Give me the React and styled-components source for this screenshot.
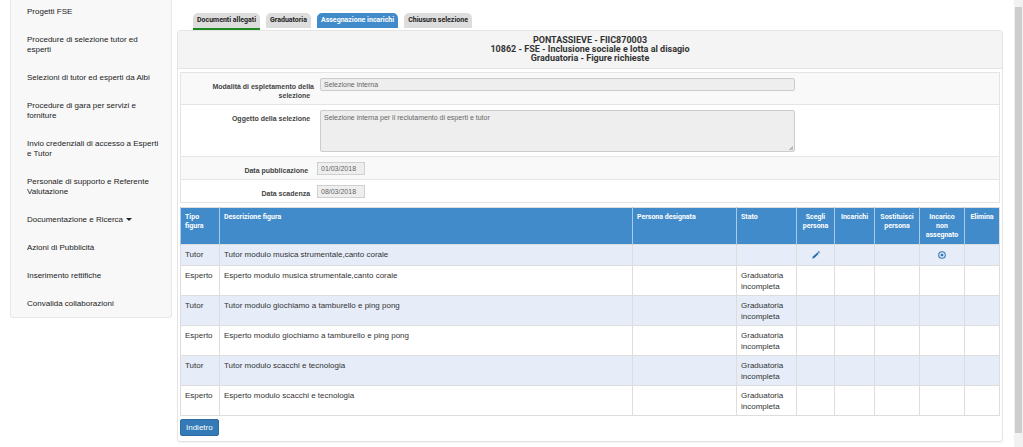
import styled, { createGlobalStyle } from 'styled-components'

const menu = [
  { label: 'Progetti FSE' },
  { label: 'Procedure di selezione tutor ed esperti' },
  { label: 'Selezioni di tutor ed esperti da Albi' },
  { label: 'Procedure di gara per servizi e forniture' },
  { label: 'Invio credenziali di accesso a Esperti e Tutor' },
  { label: 'Personale di supporto e Referente Valutazione' },
  { label: 'Documentazione e Ricerca', dropdown: true },
  { label: 'Azioni di Pubblicità' },
  { label: 'Inserimento rettifiche' },
  { label: 'Convalida collaborazioni' },
]

const tabs = [
  { label: 'Documenti allegati', done: true },
  { label: 'Graduatoria' },
  { label: 'Assegnazione incarichi', active: true },
  { label: 'Chiusura selezione' },
]

const figure = [
  {
    tipo: 'Tutor',
    descrizione: 'Tutor modulo musica strumentale,canto corale',
    stato: '',
    editable: true,
  },
  {
    tipo: 'Esperto',
    descrizione: 'Esperto modulo musica strumentale,canto corale',
    stato: 'Graduatoria incompleta',
  },
  {
    tipo: 'Tutor',
    descrizione: 'Tutor modulo giochiamo a tamburello e ping pong',
    stato: 'Graduatoria incompleta',
  },
  {
    tipo: 'Esperto',
    descrizione: 'Esperto modulo giochiamo a tamburello e ping pong',
    stato: 'Graduatoria incompleta',
  },
  {
    tipo: 'Tutor',
    descrizione: 'Tutor modulo scacchi e tecnologia',
    stato: 'Graduatoria incompleta',
  },
  {
    tipo: 'Esperto',
    descrizione: 'Esperto modulo scacchi e tecnologia',
    stato: 'Graduatoria incompleta',
  },
]

export default function App() {
  return (
    <>
      <GlobalStyle />
      <Page>
        <Sidebar>
          {menu.map(({ label, dropdown }) => (
            <MenuLink key={label} href="#">
              {label}
              {dropdown && <Caret />}
            </MenuLink>
          ))}
        </Sidebar>
        <Main>
          <Tabs>
            {tabs.map(({ label, active, done }) => (
              <Tab key={label} href="#" $active={active} $done={done}>
                {label}
              </Tab>
            ))}
          </Tabs>
          <Panel>
            <Title>
              PONTASSIEVE - FIIC870003
              <br />
              10862 - FSE - Inclusione sociale e lotta al disagio
              <br />
              Graduatoria - Figure richieste
            </Title>
            <Content>
              <Form>
                <FormRow $shaded>
                  <Label htmlFor="modalita">
                    Modalità di espletamento della selezione&nbsp;&nbsp;
                  </Label>
                  <TextInput id="modalita" defaultValue="Selezione interna" readOnly />
                </FormRow>
                <FormRow>
                  <Label htmlFor="oggetto">Oggetto della selezione&nbsp;&nbsp;</Label>
                  <TextArea
                    id="oggetto"
                    defaultValue="Selezione interna per il reclutamento di esperti e tutor"
                    readOnly
                  />
                </FormRow>
                <FormRow $shaded $compact>
                  <Label htmlFor="pubblicazione">
                    Data pubblicazione&nbsp;&nbsp;&nbsp;
                  </Label>
                  <DateInput id="pubblicazione" defaultValue="01/03/2018" readOnly />
                </FormRow>
                <FormRow $compact>
                  <Label htmlFor="scadenza">Data scadenza&nbsp;&nbsp;</Label>
                  <DateInput id="scadenza" defaultValue="08/03/2018" readOnly />
                </FormRow>
              </Form>
              <Table>
                <colgroup>
                  <Col $width={39} />
                  <col />
                  <Col $width={104} />
                  <Col $width={60} />
                  <Col $width={38} />
                  <Col $width={40} />
                  <Col $width={45} />
                  <Col $width={45} />
                  <Col $width={35} />
                </colgroup>
                <thead>
                  <tr>
                    <Th>
                      Tipo
                      <br />
                      figura
                    </Th>
                    <Th>Descrizione figura</Th>
                    <Th>Persona designata</Th>
                    <Th>Stato</Th>
                    <Th $center>Scegli persona</Th>
                    <Th $center>Incarichi</Th>
                    <Th $center>Sostituisci persona</Th>
                    <Th $center>
                      Incarico
                      <br />
                      non
                      <br />
                      assegnato
                    </Th>
                    <Th $center>Elimina</Th>
                  </tr>
                </thead>
                <tbody>
                  {figure.map(({ tipo, descrizione, stato, editable }) => (
                    <Row key={descrizione}>
                      <Td>{tipo}</Td>
                      <Td>{descrizione}</Td>
                      <Td />
                      <Td>{stato}</Td>
                      <Td $center>
                        {editable && (
                          <IconButton aria-label="Scegli persona">
                            <PencilIcon />
                          </IconButton>
                        )}
                      </Td>
                      <Td />
                      <Td />
                      <Td $center>
                        {editable && (
                          <IconButton aria-label="Incarico non assegnato">
                            <RemoveIcon />
                          </IconButton>
                        )}
                      </Td>
                      <Td />
                    </Row>
                  ))}
                </tbody>
              </Table>
              <BackButton>Indietro</BackButton>
            </Content>
          </Panel>
        </Main>
        <ScrollTrack>
          <ScrollThumb />
        </ScrollTrack>
      </Page>
    </>
  )
}

function PencilIcon() {
  return (
    <svg width="8" height="8" viewBox="0 0 16 16" fill="#2a6fb0">
      <path d="M0.5 15.5 L1.8 11.2 L10.6 2.8 L13.4 5.6 L4.8 14.2 Z" />
      <path d="M11.5 2 L13 0.6 Q13.8 0 14.6 0.8 L15.3 1.5 Q16 2.4 15.4 3.2 L14.2 4.7 Z" />
    </svg>
  )
}

function RemoveIcon() {
  return (
    <svg width="8" height="8" viewBox="0 0 16 16" fill="none" stroke="#2f78ba">
      <circle cx="8" cy="8" r="6.6" strokeWidth="2.2" />
      <path d="M5.6 5.6 L10.4 10.4 M10.4 5.6 L5.6 10.4" strokeWidth="2.4" />
    </svg>
  )
}

const headingFont = "Roboto, 'Liberation Sans', Arial, sans-serif"

const GlobalStyle = createGlobalStyle`
  * {
    box-sizing: border-box;
  }

  body {
    margin: 0;
    background: #fff;
    color: #333;
    font-family: 'Liberation Sans', Arial, sans-serif;
    font-size: 8px;
    line-height: 11px;
  }

  button, input, textarea {
    font-family: inherit;
  }
`

const Page = styled.div`
  display: flex;
  align-items: flex-start;
  min-height: 100vh;
  padding-left: 10px;
`

const Sidebar = styled.nav`
  display: flex;
  flex-direction: column;
  gap: 18px;
  flex: none;
  width: 162px;
  padding: 7px 8px 8px 16px;
  background: #f8f8f8;
  border: 1px solid #e7e7e7;
  border-top: none;
  border-radius: 0 0 3px 3px;
`

const MenuLink = styled.a`
  color: #222;
  line-height: 10px;
  text-decoration: none;
`

const Caret = styled.span`
  display: inline-block;
  margin-left: 3px;
  vertical-align: middle;
  border-top: 3px solid #222;
  border-left: 3px solid transparent;
  border-right: 3px solid transparent;
`

const Main = styled.main`
  flex: 1;
  min-width: 0;
  padding: 13px 11px 5px 5px;
`

const Tabs = styled.nav`
  display: flex;
  align-items: flex-start;
  gap: 6px;
  height: 17px;
  padding-left: 16px;
`

const Tab = styled.a`
  padding: 3px 4px;
  border-bottom: ${(props) => (props.$done ? '2px solid #1f8a1f' : 'none')};
  border-radius: 5px 5px 0 0;
  background: ${(props) => (props.$active ? '#428bca' : '#ddd')};
  color: ${(props) => (props.$active ? '#fff' : '#222')};
  font-family: ${headingFont};
  font-size: 7px;
  font-weight: bold;
  line-height: 9px;
  text-decoration: none;
`

const Panel = styled.section`
  border: 1px solid #e4e4e4;
  border-radius: 3px;
  box-shadow: 0 1px 1px rgba(0, 0, 0, 0.05);
`

const Title = styled.h1`
  margin: 0;
  padding: 5px;
  border-bottom: 1px solid #e4e4e4;
  background: #f4f4f4;
  font-family: ${headingFont};
  font-size: 9px;
  font-weight: bold;
  line-height: 9px;
  text-align: center;
`

const Content = styled.div`
  padding: 3px 2px 5px;
`

const Form = styled.form`
  margin-bottom: 4px;
  border: 1px solid #e4e4e4;
  border-bottom: none;
`

const FormRow = styled.div`
  display: grid;
  grid-template-columns: 133px 1fr;
  column-gap: ${(props) => (props.$compact ? '3px' : '6px')};
  align-items: start;
  padding: 5px 0 4px;
  border-bottom: 1px solid #e4e4e4;
  background: ${(props) => (props.$shaded ? '#f9f9f9' : '#fff')};
`

const Label = styled.label`
  padding: 4px 0 0 20px;
  color: #444;
  font-size: 7px;
  font-weight: bold;
  line-height: 9px;
  text-align: right;
`

const TextInput = styled.input`
  width: 70%;
  height: 13px;
  padding: 0 3px;
  border: 1px solid #ccc;
  border-radius: 2px;
  background: #eee;
  color: #666;
  font-size: 7px;
`

const TextArea = styled.textarea`
  display: block;
  width: 70%;
  height: 42px;
  padding: 3px;
  border: 1px solid #ccc;
  border-radius: 2px;
  background: linear-gradient(135deg, transparent 50%, #bbb 50%) no-repeat right 1px
    bottom 1px / 5px 5px #eee;
  color: #666;
  font-size: 7px;
  line-height: 8px;
  resize: none;
`

const DateInput = styled.input`
  width: 48px;
  height: 13px;
  padding: 0 3px;
  border: 1px solid #d0d0d0;
  background: #eee;
  color: #666;
  font-size: 7px;
`

const Table = styled.table`
  width: 100%;
  table-layout: fixed;
  border-collapse: collapse;
  border: 1px solid #ddd;
`

const Col = styled.col`
  width: ${(props) => props.$width}px;
`

const Th = styled.th`
  padding: 5px 4px 4px;
  border-left: 1px solid #a9cbe8;
  background: #428bca;
  color: #fff;
  font-family: ${headingFont};
  font-size: 7px;
  line-height: 9px;
  text-align: ${(props) => (props.$center ? 'center' : 'left')};
  vertical-align: top;
`

const Row = styled.tr`
  &:nth-child(odd) {
    background: #e6edf9;
  }
`

const Td = styled.td`
  padding: 4px 4px 3px;
  border: 1px solid #ddd;
  color: #333;
  text-align: ${(props) => (props.$center ? 'center' : 'left')};
  vertical-align: top;
`

const IconButton = styled.button`
  display: block;
  margin: 0 auto;
  padding: 2px 0 3px;
  border: none;
  background: none;
  line-height: 0;
`

const BackButton = styled.button`
  display: block;
  margin-top: 3px;
  padding: 3px 5px;
  border: 1px solid #2e6da4;
  border-radius: 2px;
  background: #337ab7;
  color: #fff;
  font-size: 8px;
  line-height: 9px;
`

const ScrollTrack = styled.div`
  align-self: stretch;
  width: 9px;
  padding: 7px 1px 14px;
  display: flex;
  background: #f1f1f1;
`

const ScrollThumb = styled.div`
  flex: 1;
  background: #cdcdcd;
`
